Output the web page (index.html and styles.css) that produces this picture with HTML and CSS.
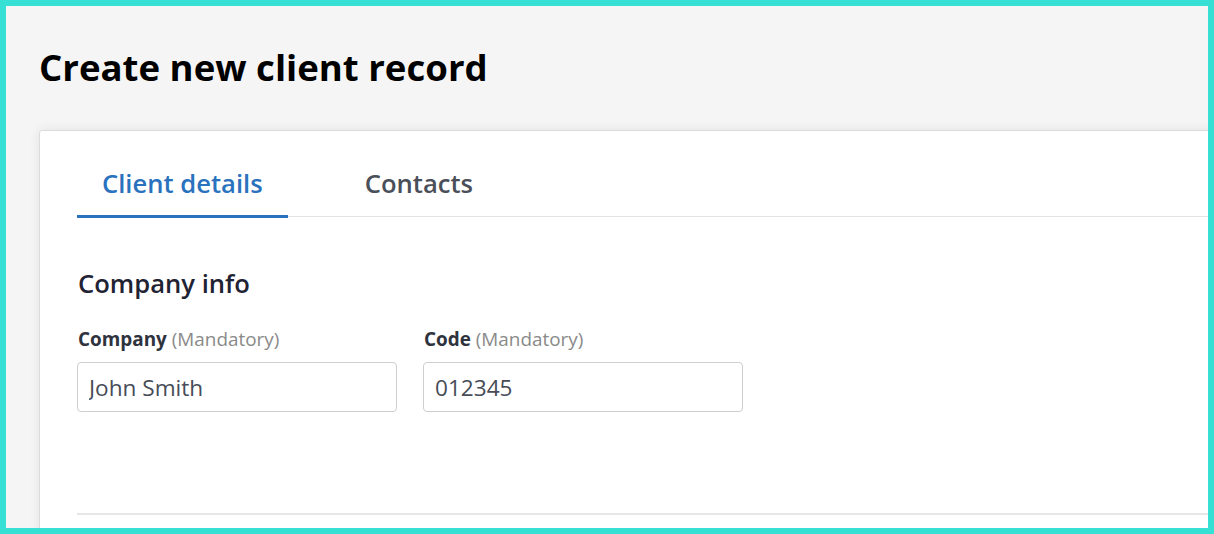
FILE: index.html
```html
<!DOCTYPE html>
<html lang="en">
<head>
<meta charset="utf-8">
<title>Create new client record</title>
<link rel="stylesheet" href="styles.css">
</head>
<body>
<div class="frame">
  <div class="page">
    <h1 class="title">Create new client record</h1>
    <div class="card">
      <div class="tabs">
        <div class="tab tab-active">Client details</div>
        <div class="tab">Contacts</div>
      </div>
      <h2 class="section-title">Company info</h2>
      <div class="fields">
        <div class="field">
          <label class="label"><b>Company</b> <span class="hint">(Mandatory)</span></label>
          <input class="input" type="text" value="John Smith">
        </div>
        <div class="field">
          <label class="label"><b>Code</b> <span class="hint">(Mandatory)</span></label>
          <input class="input" type="text" value="012345">
        </div>
      </div>
      <div class="divider"></div>
    </div>
  </div>
</div>
</body>
</html>
```

FILE: styles.css
```css
* { box-sizing: border-box; }
html, body { margin: 0; padding: 0; }
body { font-family: "Open Sans", "Noto Sans", sans-serif; }
.frame {
  width: 1214px;
  height: 534px;
  border: 6px solid #36e0d5;
  background: #f5f5f5;
  overflow: hidden;
}
.page {
  padding: 0 0 0 33px;
  width: 1240px;
}
.title {
  margin: 0;
  padding-top: 36px;
  font-size: 36.6px;
  line-height: 50px;
  font-weight: 700;
  color: #000;
}
.card {
  margin-top: 38px;
  background: #fff;
  border: 1px solid #dcdcdc;
  border-radius: 3px;
  box-shadow: 0 0 12px rgba(0,0,0,0.08);
  padding: 0 0 0 37px;
  height: 420px;
}
.tabs {
  display: flex;
  border-bottom: 1px solid #e3e3e3;
  margin-top: 22px;
}
.tab {
  font-size: 25.6px;
  font-weight: 600;
  color: #4a4f59;
  line-height: 62px;
  padding: 0 25px 3px;
  margin-right: 52px;
  margin-bottom: -2px;
}
.tab-active {
  color: #2a72bd;
  box-shadow: inset 0 -3px 0 #2a72bd;
}
.section-title {
  margin: 50px 0 0 1px;
  font-size: 25.6px;
  font-weight: 600;
  color: #1f2333;
  line-height: 34px;
}
.fields {
  display: flex;
  gap: 26px;
  margin-top: 25px;
}
.field {
  display: flex;
  flex-direction: column;
}
.label {
  font-size: 18.9px;
  line-height: 26px;
  color: #2e333d;
  padding-left: 1px;
}
.label b { font-weight: 700; }
.hint { color: #8a8a8a; font-weight: 400; }
.input {
  margin-top: 10px;
  width: 320px;
  height: 50px;
  border: 1px solid #cfcfcf;
  border-radius: 4px;
  padding: 0 11px;
  font-family: "Open Sans", "Noto Sans", sans-serif;
  font-size: 22.6px;
  color: #474c57;
  background: #fff;
  outline: none;
}
.divider {
  margin-top: 101px;
  border-top: 2px solid #e6e6e6;
}
```
